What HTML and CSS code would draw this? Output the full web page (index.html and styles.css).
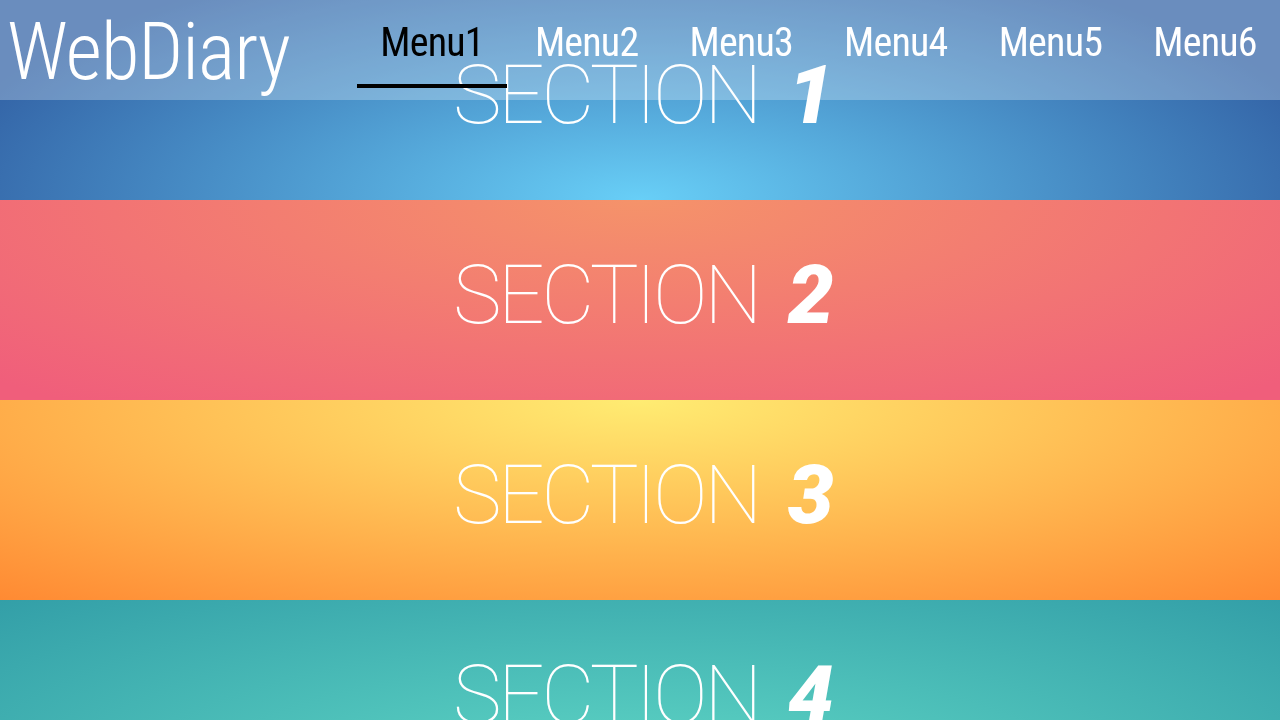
FILE: index.html
```html
<!DOCTYPE html>
<html lang="en">
<head>
<meta charset="utf-8">
<title>WebDiary</title>
<link rel="stylesheet" href="styles.css">
</head>
<body>
<header class="site-header">
  <a class="logo" href="#">WebDiary</a>
  <nav class="nav">
    <a class="nav-item is-active" href="#s1">Menu1</a>
    <a class="nav-item" href="#s2">Menu2</a>
    <a class="nav-item" href="#s3">Menu3</a>
    <a class="nav-item" href="#s4">Menu4</a>
    <a class="nav-item" href="#s5">Menu5</a>
    <a class="nav-item" href="#s6">Menu6</a>
  </nav>
</header>
<main class="sections">
  <section class="section section-1" id="s1"><h2 class="section-title">SECTION <b class="section-num">1</b></h2></section>
  <section class="section section-2" id="s2"><h2 class="section-title">SECTION <b class="section-num">2</b></h2></section>
  <section class="section section-3" id="s3"><h2 class="section-title">SECTION <b class="section-num">3</b></h2></section>
  <section class="section section-4" id="s4"><h2 class="section-title">SECTION <b class="section-num">4</b></h2></section>
</main>
</body>
</html>
```

FILE: styles.css
```css
html, body {
  margin: 0;
  padding: 0;
}

body {
  overflow: hidden;
  font-family: Roboto, "Liberation Sans", sans-serif;
  color: #fff;
}

.site-header {
  position: fixed;
  top: 0;
  left: 0;
  right: 0;
  height: 100px;
  background: rgba(255, 255, 255, 0.27);
  display: flex;
  justify-content: space-between;
  align-items: flex-start;
  z-index: 10;
}

.logo {
  font-family: Roboto, "Liberation Sans", sans-serif;
  font-weight: 300;
  font-stretch: 75%;
  font-size: 79px;
  letter-spacing: -1px;
  line-height: 96px;
  padding: 4px 0 0 7px;
  color: #fff;
  text-decoration: none;
}

.nav {
  display: flex;
  margin-right: -2.3px;
}

.nav-item {
  position: relative;
  box-sizing: border-box;
  width: 154.6px;
  height: 88px;
  padding-top: 23px;
  line-height: 40px;
  font-family: Roboto, "Liberation Sans", sans-serif;
  font-weight: 400;
  font-stretch: 75%;
  font-size: 40px;
  letter-spacing: -0.8px;
  text-align: center;
  color: #fff;
  text-decoration: none;
}

.nav-item.is-active {
  color: #000;
}

.nav-item.is-active::after {
  content: "";
  position: absolute;
  left: 2px;
  right: 2px;
  bottom: 0;
  height: 4px;
  background: #000;
}

.section {
  height: 200px;
  display: flex;
  align-items: center;
  justify-content: center;
}

.section-title {
  margin: 0;
  padding: 0 0 10px 7px;
  font-family: Roboto, "Liberation Sans", sans-serif;
  font-weight: 100;
  font-size: 82px;
  letter-spacing: -3.5px;
  line-height: 82px;
  color: #fff;
  white-space: nowrap;
}

.section-num {
  margin-left: 13px;
  font-weight: 900;
  font-style: italic;
  letter-spacing: 0;
}

.section-1 {
  background: radial-gradient(ellipse 720px 260px at 50% 100%, #68cff7 0%, #3363a6 100%);
}

.section-2 {
  background: radial-gradient(ellipse 900px 260px at 50% 0%, #f5936a 0%, #f05e7b 100%);
}

.section-3 {
  background: radial-gradient(ellipse 1000px 260px at 50% 0%, #ffec72 0%, #ff8a33 100%);
}

.section-4 {
  background: radial-gradient(ellipse 1000px 300px at 50% 100%, #63dbc8 0%, #2f9aa5 100%);
}
```
